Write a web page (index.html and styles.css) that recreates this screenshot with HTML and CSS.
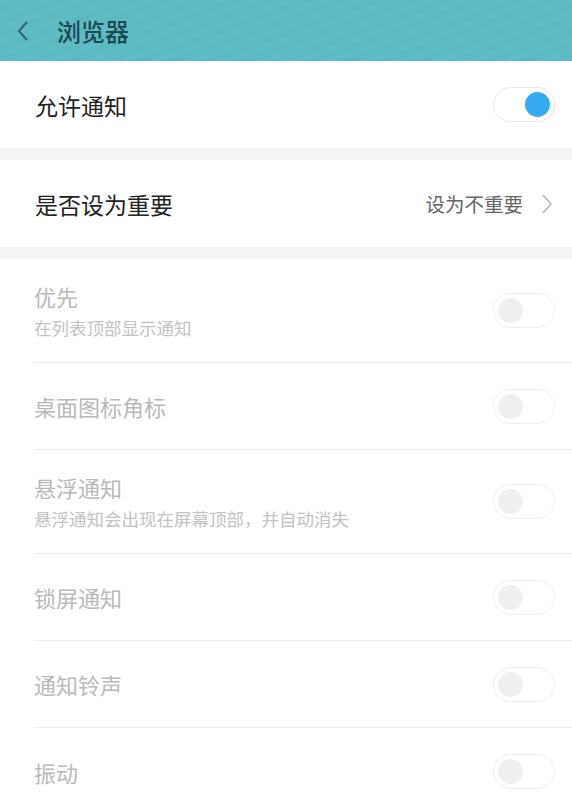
FILE: index.html
```html
<!DOCTYPE html>
<html>

<head>
  <title>浏览器</title>
  <meta charset="UTF-8">
  <link rel="stylesheet" href="styles.css">
</head>

<body>
  <header class="topbar">
    <svg class="back" width="14" height="22" viewBox="0 0 14 22">
      <path d="M11 2 L3 11 L11 20" fill="none" stroke="#2c6570" stroke-width="2"/>
    </svg>
    <span class="topbar-title">浏览器</span>
  </header>

  <section class="group">
    <div class="row row-main">
      <span class="label">允许通知</span>
      <span class="switch on"><span class="knob"></span></span>
    </div>
  </section>

  <section class="group">
    <div class="row row-main">
      <span class="label">是否设为重要</span>
      <span class="value">设为不重要
        <svg class="arrow" width="12" height="22" viewBox="0 0 12 22">
          <path d="M2 2 L10 11 L2 20" fill="none" stroke="#b5b5b5" stroke-width="1.5"/>
        </svg>
      </span>
    </div>
  </section>

  <section class="group disabled">
    <div class="row row-tall">
      <div class="texts">
        <span class="label">优先</span>
        <span class="sub">在列表顶部显示通知</span>
      </div>
      <span class="switch"><span class="knob"></span></span>
    </div>
    <div class="row">
      <span class="label">桌面图标角标</span>
      <span class="switch"><span class="knob"></span></span>
    </div>
    <div class="row row-tall">
      <div class="texts">
        <span class="label">悬浮通知</span>
        <span class="sub">悬浮通知会出现在屏幕顶部，并自动消失</span>
      </div>
      <span class="switch"><span class="knob"></span></span>
    </div>
    <div class="row">
      <span class="label">锁屏通知</span>
      <span class="switch"><span class="knob"></span></span>
    </div>
    <div class="row">
      <span class="label">通知铃声</span>
      <span class="switch"><span class="knob"></span></span>
    </div>
    <div class="row">
      <span class="label">振动</span>
      <span class="switch"><span class="knob"></span></span>
    </div>
  </section>
</body>

</html>
```

FILE: styles.css
```css
* {
  box-sizing: border-box;
}

body {
  margin: 0;
  background-color: #f4f4f4;
  font-family: "Noto Sans CJK SC", "Noto Sans", sans-serif;
  overflow: hidden;
}

.topbar {
  height: 61px;
  background-color: #5cbbc4;
  background-image: repeating-linear-gradient(160deg, rgba(255,255,255,0.02) 0 6px, rgba(0,0,0,0.01) 6px 12px);
  display: flex;
  align-items: center;
  padding-left: 16px;
}

.back {
  margin-right: 27px;
}

.topbar-title {
  font-size: 24px;
  font-weight: 500;
  color: #1c4852;
}

.group {
  background-color: #fff;
  margin-bottom: 12px;
}

.row {
  height: 87px;
  margin-left: 34px;
  padding-right: 17px;
  display: flex;
  align-items: center;
  justify-content: space-between;
  border-bottom: 1px solid #ececec;
}

.row:last-child {
  border-bottom: none;
}

.row-main {
  height: 87px;
  margin-left: 35px;
}

.row-main .label {
  font-size: 23px;
}

.row-tall {
  height: 104px;
}

.label {
  font-size: 22px;
  color: #222;
}

.disabled .label {
  color: #b9b9b9;
}

.texts {
  display: flex;
  flex-direction: column;
  margin-top: -2px;
}

.sub {
  font-size: 17.5px;
  color: #c2c2c2;
  margin-top: 3px;
}

.value {
  display: flex;
  align-items: center;
  font-size: 19.5px;
  color: #666;
}

.arrow {
  margin-left: 18px;
  margin-right: 2px;
}

.switch {
  width: 62px;
  height: 35px;
  border-radius: 18px;
  border: 1.5px solid #eeeeee;
  background-color: #fff;
  display: flex;
  align-items: center;
  padding: 0 4px;
}

.switch .knob {
  width: 25px;
  height: 25px;
  border-radius: 50%;
  background-color: #efefef;
}

.switch.on {
  justify-content: flex-end;
  border-color: #f0e6df;
}

.switch.on .knob {
  background-color: #36a9f2;
}
```
